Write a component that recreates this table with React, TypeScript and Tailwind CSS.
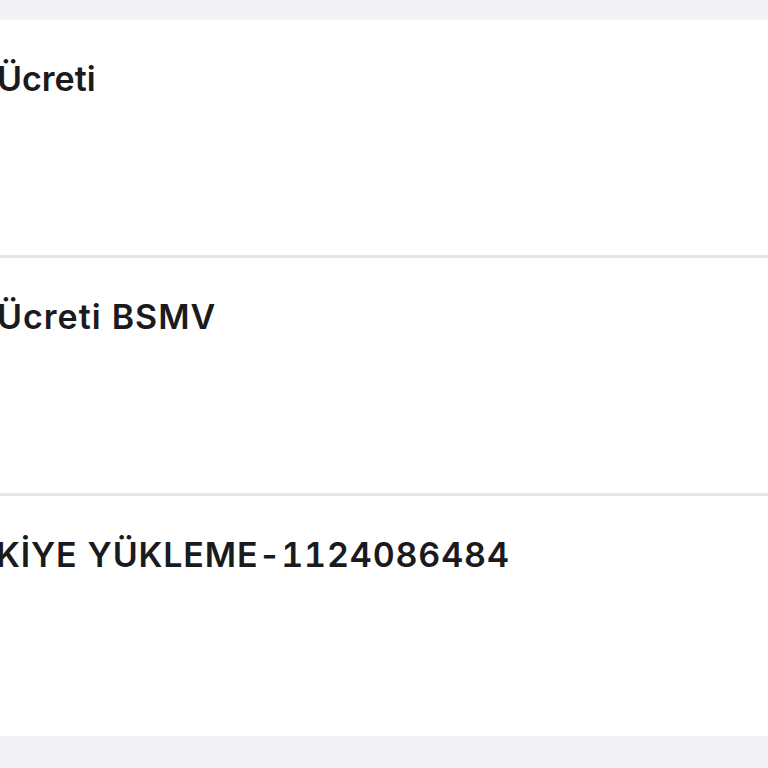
const rows = [
  { label: "Ücreti", cls: "-ml-[3px] tracking-[0px]" },
  { label: "Ücreti BSMV", cls: "-ml-[3px] tracking-[1px]" },
  { label: "KİYE YÜKLEME-1124086484", cls: "-ml-[4px] tracking-[0.85px]" },
];

export default function App() {
  return (
    <div className="h-[768px] w-[768px] overflow-hidden bg-[#f3f3f5] pt-[20px] font-['Inter',sans-serif]">
      <div className="bg-white">
        {rows.map((row, i) => (
          <div
            key={row.label}
            className={
              i < rows.length - 1
                ? "h-[238px] border-b-[3px] border-[#e6e6e8] pt-[42px]"
                : "h-[240px] pt-[42px]"
            }
          >
            <p
              className={`${row.cls} whitespace-nowrap text-[34px] font-semibold leading-none tabular-nums text-[#1b1b1d]`}
            >
              {row.label}
            </p>
          </div>
        ))}
      </div>
    </div>
  );
}
